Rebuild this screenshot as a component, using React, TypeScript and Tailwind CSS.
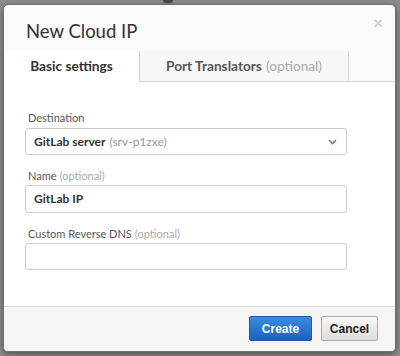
import React from "react";

export default function App() {
  const font = { fontFamily: "Lato, 'Open Sans', sans-serif" };
  return (
    <div className="relative w-[400px] h-[356px] bg-[#8d8d8d] pt-[4px] pl-[3px] overflow-hidden" style={font}>
      <div className="absolute left-[163px] top-[-3px] w-[10px] h-[6px] rounded-full bg-[#4a4a4a]" />
      <div className="relative w-[393px] h-[348px] rounded-[5px] bg-[#fafafa] border border-[#6f6f6f] shadow-[0_2px_6px_rgba(0,0,0,0.45)] flex flex-col overflow-hidden">
        <div className="relative h-[46px] pl-[22px] pt-[15px]">
          <div className="text-[18.5px] leading-[22px] text-[#333] font-normal">New Cloud IP</div>
          <div className="absolute right-[12px] top-[9px] text-[17px] leading-[17px] font-bold text-[#cfcfcf]">×</div>
        </div>
        <div className="flex h-[31px]">
          <div className="w-[135px] bg-white flex items-center justify-center text-[13.7px] font-bold text-[#333]">
            Basic settings
          </div>
          <div className="w-[210px] bg-[#f7f7f7] border-l border-r border-b border-[#d4d4d4] flex items-center justify-center text-[13.7px] text-[#555]">
            <span className="font-bold">Port Translators</span>
            <span className="ml-[4px] text-[#aaa]">(optional)</span>
          </div>
          <div className="flex-1 border-b border-[#d4d4d4]" />
        </div>
        <div className="flex-1 bg-white px-[21px] pt-[28px]">
          <div className="text-[11px] leading-[16px] text-[#555] pl-[3px]">Destination</div>
          <div className="mt-[2px] h-[27px] w-[322px] border border-[#ccc] rounded-[3px] flex items-center px-[8px] text-[12px]">
            <span className="font-bold text-[#333]">GitLab server</span>
            <span className="ml-[4px] text-[#999]">(srv-p1zxe)</span>
            <svg className="ml-auto mr-[1px]" width="9" height="6" viewBox="0 0 9 6">
              <path d="M1 1 L4.5 4.5 L8 1" stroke="#777" strokeWidth="1.6" fill="none" />
            </svg>
          </div>
          <div className="mt-[13px] text-[11px] leading-[16px] text-[#555] pl-[3px]">
            Name<span className="ml-[3px] text-[#aaa]">(optional)</span>
          </div>
          <div className="mt-[1px] h-[28px] w-[322px] border border-[#ccc] rounded-[3px] flex items-center px-[8px] text-[12px] font-bold text-[#333]">
            GitLab IP
          </div>
          <div className="mt-[13px] text-[11px] leading-[16px] text-[#555] pl-[3px]">
            Custom Reverse DNS<span className="ml-[3px] text-[#aaa]">(optional)</span>
          </div>
          <div className="mt-[1px] h-[27px] w-[322px] border border-[#ccc] rounded-[3px]" />
        </div>
        <div className="h-[45px] bg-[#f5f5f5] border-t border-[#dcdcdc] flex items-start justify-end pt-[9px] pr-[17px] gap-[9px]" style={{ fontFamily: "'Liberation Sans', Arial, sans-serif" }}>
          <div className="w-[63px] h-[25px] rounded-[2px] border border-[#1b5aa5] bg-gradient-to-b from-[#3a8be0] to-[#1c63bd] flex items-center justify-center text-[12px] font-bold text-white">
            Create
          </div>
          <div className="w-[57px] h-[25px] rounded-[2px] border border-[#aaa] bg-gradient-to-b from-[#f8f8f8] to-[#dedede] flex items-center justify-center text-[12px] font-bold text-[#222]">
            Cancel
          </div>
        </div>
      </div>
    </div>
  );
}
